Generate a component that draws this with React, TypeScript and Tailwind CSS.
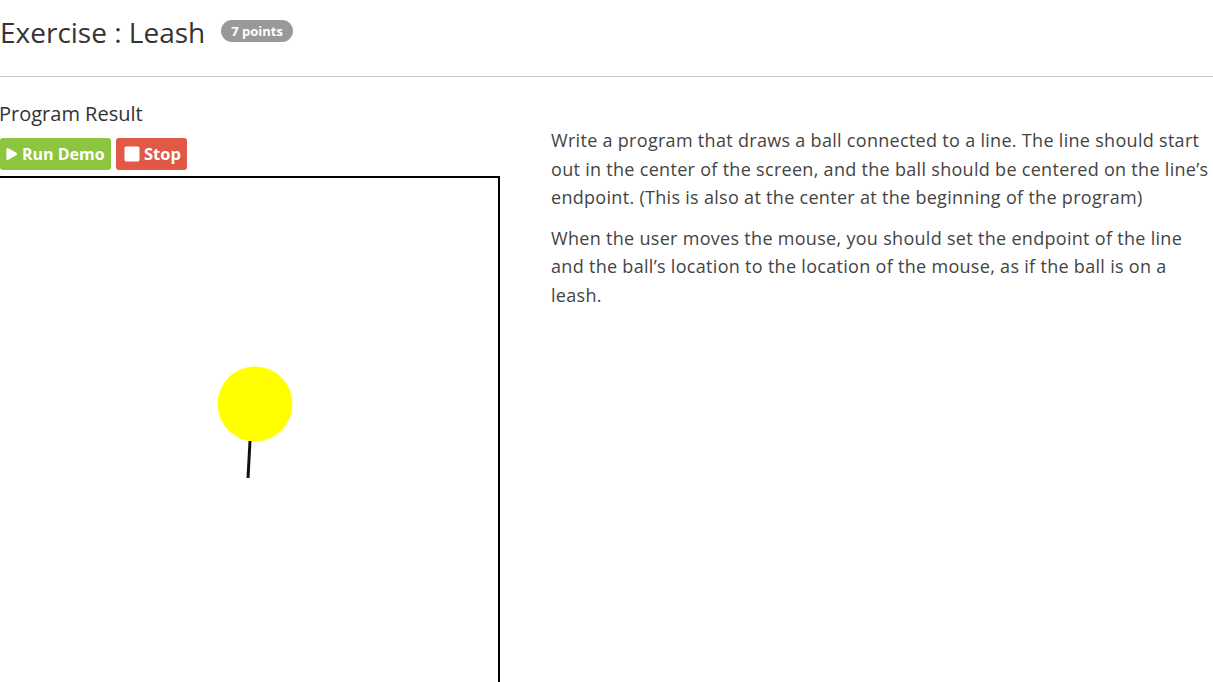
import { Play, Square } from 'lucide-react';

function Header() {
    return <div className="flex items-center h-[77px] border-b border-[#cccccc]">
        <h1 className="text-[28px] text-[#333333] -mt-[12px]">Exercise : Leash</h1>
        <span className="ml-[16px] -mt-[14px] rounded-full bg-[#999999] text-white font-bold text-[13px] leading-[22px] px-[10px]">7 points</span>
    </div>;
}

function Canvas() {
    return <div className="w-[500px] h-[510px] border-t-2 border-r-2 border-black bg-white">
        <svg width="498" height="508" viewBox="0 0 498 508">
            <circle cx="255" cy="226" r="37.5" fill="#ffff00" />
            <line x1="250" y1="263" x2="248" y2="300" stroke="#111111" strokeWidth="3" />
        </svg>
    </div>;
}

function App() {
    return (
        <div className="w-[1213px] h-[682px] overflow-hidden bg-white" style={{ fontFamily: '"Open Sans", Lato, sans-serif' }}>
            <Header />
            <div className="flex gap-[51px] pt-[23px]">
                <div className="shrink-0">
                    <h2 className="text-[20px] leading-[28px] text-[#333333] -ml-[1px]">Program Result</h2>
                    <div className="flex gap-[5px] mt-[10px] mb-[6px]">
                        <button className="flex items-center gap-[3px] h-[32px] w-[111px] pl-[3px] rounded-[3px] bg-[#8cc63f] text-white font-bold text-[16px]">
                            <Play size={16} fill="white" strokeWidth={0} />Run Demo
                        </button>
                        <button className="flex items-center gap-[4px] h-[32px] w-[71px] pl-[8px] rounded-[3px] bg-[#e25846] text-white font-bold text-[16.5px]">
                            <Square size={16} fill="white" strokeWidth={0} className="scale-125" />Stop
                        </button>
                    </div>
                    <Canvas />
                </div>
                <div className="w-[662px] shrink-0 pt-[26px] text-[18px] tracking-[0.3px] leading-[28.5px] text-[#444444] whitespace-nowrap">
                    <p>Write a program that draws a ball connected to a line. The line should start<br />out in the center of the screen, and the ball should be centered on the line’s<br />endpoint. (This is also at the center at the beginning of the program)</p>
                    <p className="mt-[12px]">When the user moves the mouse, you should set the endpoint of the line<br />and the ball’s location to the location of the mouse, as if the ball is on a<br />leash.</p>
                </div>
            </div>
        </div>
    );
}

export default App;
